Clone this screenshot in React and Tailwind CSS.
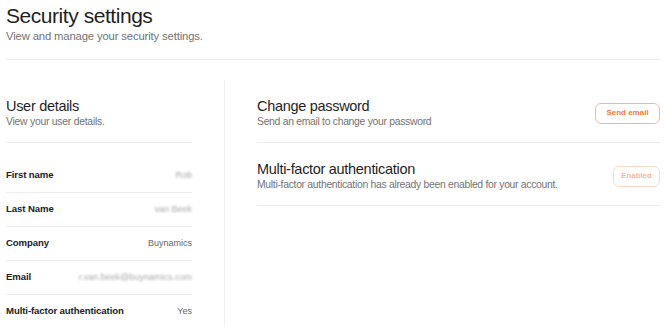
import React from 'react';

const userRows = [
  { label: 'First name', value: 'Rob', blurred: true },
  { label: 'Last Name', value: 'van Beek', blurred: true },
  { label: 'Company', value: 'Buynamics', blurred: false },
  { label: 'Email', value: 'r.van.beek@buynamics.com', blurred: true },
  { label: 'Multi-factor authentication', value: 'Yes', blurred: false }
];

function App() {
  return (
    <div
      className="w-[670px] h-[335px] bg-white pl-[6px] pr-[10px] overflow-hidden text-[#1f1f1f]"
      style={{ fontFamily: '"Liberation Sans", Arial, sans-serif' }}
    >
      {renderHeader()}
      <div className="flex mt-[20px]">
        {renderUserDetails()}
        {renderSettings()}
      </div>
    </div>
  );
}

function renderHeader() {
  return (
    <div className="pt-[4px] pb-[16px] border-b border-[#ececec]">
      <h1 className="text-[21px] leading-[24px] font-normal tracking-[-0.45px]">Security settings</h1>
      <p className="mt-[1px] text-[11.3px] leading-[14px] tracking-[-0.15px] text-[#737373]">View and manage your security settings.</p>
    </div>
  );
}

function renderUserDetails() {
  return (
    <div className="w-[218px] pr-[32px]">
      <div className="pt-[17px] pb-[13px] border-b border-[#ececec]">
        <h2 className="text-[14.5px] leading-[18px] font-normal tracking-[-0.3px]">User details</h2>
        <p className="text-[10.4px] leading-[14px] tracking-[-0.25px] text-[#737373]">View your user details.</p>
      </div>
      <div className="mt-[16px]">
        {userRows.map((row, index) => (
          <div
            key={row.label}
            className={`flex items-center justify-between ${index < userRows.length - 1 ? 'h-[34px] border-b border-[#ececec]' : 'h-[33px]'}`}
          >
            <span className="text-[9.6px] font-bold tracking-[-0.1px] text-[#222222]">{row.label}</span>
            <span className={`text-[9px] ${row.blurred ? 'text-[#a8a8a8] blur-[1px]' : 'text-[#666666]'}`}>{row.value}</span>
          </div>
        ))}
      </div>
    </div>
  );
}

function renderSettings() {
  return (
    <div className="flex-1 h-[247px] border-l border-[#f0f0f0] pl-[32px]">
      <div className="flex items-center justify-between pt-[17px] pb-[13px] border-b border-[#ececec]">
        <div>
          <h2 className="text-[14.5px] leading-[18px] font-normal tracking-[-0.3px]">Change password</h2>
          <p className="text-[10.4px] leading-[14px] tracking-[-0.3px] text-[#737373]">Send an email to change your password</p>
        </div>
        <button className="w-[65px] h-[21px] rounded-[6px] border border-[#f8b596] text-[8px] font-bold text-[#f27a3a] bg-white">
          Send email
        </button>
      </div>
      <div className="flex items-center justify-between pt-[17px] pb-[13px] border-b border-[#ececec]">
        <div>
          <h2 className="text-[14.5px] leading-[18px] font-normal tracking-[-0.3px]">Multi-factor authentication</h2>
          <p className="text-[10.4px] leading-[14px] tracking-[-0.3px] text-[#737373]">Multi-factor authentication has already been enabled for your account.</p>
        </div>
        <button className="w-[47px] h-[21px] rounded-[6px] border border-[#fbd8c6] text-[7.8px] font-bold text-[#f8b898] bg-white">
          Enabled
        </button>
      </div>
    </div>
  );
}

export default App;
